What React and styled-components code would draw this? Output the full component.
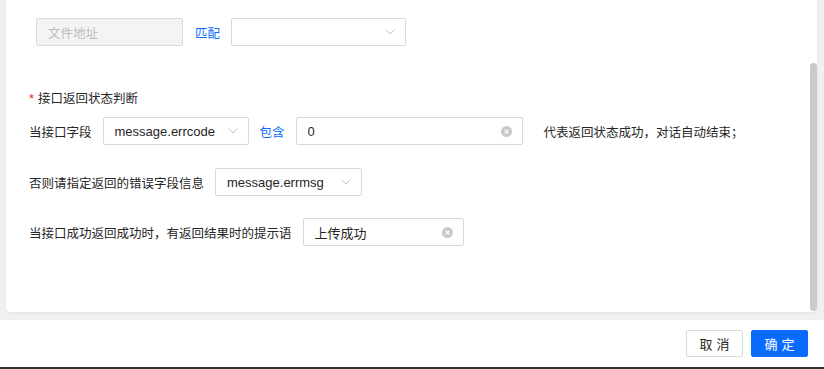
import styled, { createGlobalStyle } from "styled-components";

const GlobalStyle = createGlobalStyle`
  html, body {
    margin: 0;
    padding: 0;
    background: #f0f0f0;
    font-family: "Liberation Sans", "Noto Sans CJK SC", sans-serif;
    font-size: 13px;
    color: #262626;
  }
`;

const Chevron = () => (
  <svg width="10" height="6" viewBox="0 0 10 6" fill="none">
    <path d="M0.5 0.5L5 5L9.5 0.5" stroke="#c4c4c4" strokeWidth="1" />
  </svg>
);

const ClearIcon = () => (
  <svg width="11" height="11" viewBox="0 0 11 11">
    <circle cx="5.5" cy="5.5" r="5.5" fill="#c9c9c9" />
    <path d="M3.7 3.7L7.3 7.3M7.3 3.7L3.7 7.3" stroke="#fff" strokeWidth="1.2" />
  </svg>
);

const App = () => {
  return (
    <Page>
      <GlobalStyle />
      <Main>
        <Card>
          <Content>
            <Row $indent={7} $top={18}>
              <Field $w={147} $disabled>
                <Placeholder>文件地址</Placeholder>
              </Field>
              <LinkText $ml={1}>匹配</LinkText>
              <Field $w={175}>
                <Value />
                <Chevron />
              </Field>
            </Row>

            <SectionLabel>
              <Star>*</Star>接口返回状态判断
            </SectionLabel>

            <Row $top={8}>
              <Label>当接口字段</Label>
              <Field $w={146}>
                <Value>message.errcode</Value>
                <Chevron />
              </Field>
              <LinkText>包含</LinkText>
              <Field $w={227}>
                <Value>0</Value>
                <ClearIcon />
              </Field>
              <Label $ml={10}>代表返回状态成功，对话自动结束；</Label>
            </Row>

            <Row $top={23}>
              <Label>否则请指定返回的错误字段信息</Label>
              <Field $w={147}>
                <Value>message.errmsg</Value>
                <Chevron />
              </Field>
            </Row>

            <Row $top={22}>
              <Label>当接口成功返回成功时，有返回结果时的提示语</Label>
              <Field $w={161}>
                <Value>上传成功</Value>
                <ClearIcon />
              </Field>
            </Row>
          </Content>
          <ScrollTrack>
            <ScrollThumb />
          </ScrollTrack>
        </Card>
      </Main>
      <Footer>
        <Button>取消</Button>
        <Button $primary>确定</Button>
      </Footer>
      <BottomBar />
    </Page>
  );
};

const Page = styled.div`
  height: 369px;
  display: flex;
  flex-direction: column;
  overflow: hidden;
`;

const Main = styled.div`
  height: 320px;
  padding-left: 6px;
  box-sizing: border-box;
  display: flex;
`;

const Card = styled.div`
  width: 811px;
  height: 312px;
  background: #fff;
  border-radius: 0 0 4px 4px;
  box-shadow: 0 1px 3px rgba(0, 0, 0, 0.06);
  display: flex;
`;

const Content = styled.div`
  flex: 1;
  display: flex;
  flex-direction: column;
  padding-left: 23px;
`;

const Row = styled.div`
  display: flex;
  align-items: center;
  gap: 11px;
  margin-top: ${(p) => p.$top || 0}px;
  padding-left: ${(p) => p.$indent || 0}px;
`;

const SectionLabel = styled.div`
  margin-top: 43px;
  height: 20px;
  line-height: 20px;
  font-size: 12.5px;
  color: #262626;
  display: flex;
  align-items: center;
`;

const Star = styled.span`
  color: #f5222d;
  margin-right: 4px;
  font-size: 13px;
`;

const Label = styled.span`
  font-size: 12.5px;
  color: #262626;
  white-space: nowrap;
  margin-left: ${(p) => p.$ml || 0}px;
`;

const LinkText = styled.span`
  font-size: 12.5px;
  color: #0a6cff;
  white-space: nowrap;
  margin-left: ${(p) => p.$ml || 0}px;
`;

const Field = styled.div`
  width: ${(p) => p.$w}px;
  height: 28px;
  box-sizing: border-box;
  border: 1px solid #d9d9d9;
  border-radius: 2px;
  background: ${(p) => (p.$disabled ? "#f4f4f4" : "#fff")};
  display: flex;
  align-items: center;
  padding: 0 10px 0 11px;
  gap: 6px;
`;

const Value = styled.span`
  flex: 1;
  font-size: 13px;
  color: #262626;
  white-space: nowrap;
  overflow: hidden;
`;

const Placeholder = styled.span`
  font-size: 12.5px;
  color: #bcbcbc;
`;

const ScrollTrack = styled.div`
  width: 7px;
  display: flex;
  flex-direction: column;
`;

const ScrollThumb = styled.div`
  margin-top: 63px;
  height: 248px;
  background: #cacaca;
  border-radius: 4px;
`;

const Footer = styled.div`
  height: 47px;
  background: #fff;
  display: flex;
  justify-content: flex-end;
  align-items: flex-start;
  padding: 10px 16px 0 0;
  box-sizing: border-box;
  gap: 8px;
`;

const Button = styled.button`
  width: 57px;
  height: 27px;
  box-sizing: border-box;
  border-radius: 2px;
  border: 1px solid ${(p) => (p.$primary ? "#0a6cff" : "#d9d9d9")};
  background: ${(p) => (p.$primary ? "#0a6cff" : "#fff")};
  color: ${(p) => (p.$primary ? "#fff" : "#262626")};
  font-family: "Liberation Sans", "Noto Sans CJK SC", sans-serif;
  font-size: 13px;
  letter-spacing: 4px;
  text-indent: 4px;
  padding: 0;
  cursor: pointer;
`;

const BottomBar = styled.div`
  height: 2px;
  background: #333;
`;

export default App;
